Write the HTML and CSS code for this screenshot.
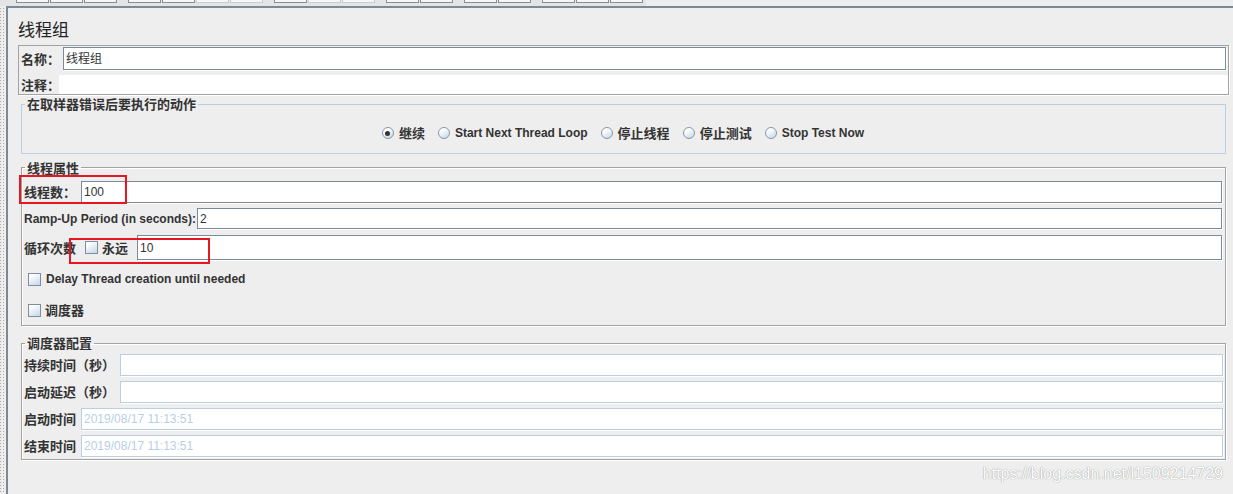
FILE: index.html
```html
<!DOCTYPE html>
<html>
<head>
<meta charset="utf-8">
<title>线程组</title>
<link rel="stylesheet" href="styles.css">
</head>
<body>
<div class="toolbar">
  <div class="tbar">
    <div class="tgroup"><span class="tb"></span><span class="tb"></span><span class="tb"></span></div>
    <div class="tgroup"><span class="tb"></span><span class="tb"></span><span class="tb dis"></span><span class="tb dis"></span></div>
    <div class="tgroup"><span class="tb"></span><span class="tb dis"></span><span class="tb dis"></span></div>
    <div class="tgroup"><span class="tb"></span><span class="tb"></span></div>
    <div class="tgroup"><span class="tb"></span><span class="tb"></span></div>
    <div class="tgroup"><span class="tb"></span><span class="tb"></span><span class="tb"></span></div>
  </div>
</div>
<div class="main">
  <div class="splitter"></div>
  <div class="panel">
    <div class="title">线程组</div>

    <div class="namebox">
      <div class="nrow">
        <span class="lbl zh w-name">名称：</span>
        <div class="field"><span class="val">线程组</span></div>
      </div>
      <div class="nrow crow">
        <span class="lbl zh w-comment">注释：</span>
        <div class="area"></div>
      </div>
    </div>

    <fieldset class="group blue err">
      <legend class="zh">在取样器错误后要执行的动作</legend>
      <div class="radios">
        <span class="ropt"><span class="rb on"></span><span class="zh">继续</span></span>
        <span class="ropt"><span class="rb"></span><span>Start Next Thread Loop</span></span>
        <span class="ropt"><span class="rb"></span><span class="zh">停止线程</span></span>
        <span class="ropt"><span class="rb"></span><span class="zh">停止测试</span></span>
        <span class="ropt"><span class="rb"></span><span>Stop Test Now</span></span>
      </div>
    </fieldset>

    <fieldset class="group etched props">
      <legend class="zh">线程属性</legend>
      <div class="frow r1">
        <span class="lbl zh w-threads">线程数：</span>
        <div class="field"><span class="val">100</span></div>
        <span class="mark mark1"></span>
      </div>
      <div class="frow r2">
        <span class="lbl w-ramp">Ramp-Up Period (in seconds):</span>
        <div class="field"><span class="val">2</span></div>
      </div>
      <div class="frow r3">
        <span class="lbl zh w-loop">循环次数</span>
        <span class="cb"></span>
        <span class="lbl zh w-forever">永远</span>
        <div class="field"><span class="val">10</span></div>
        <span class="mark mark2"></span>
      </div>
      <div class="crow2 delay">
        <span class="cb"></span>
        <span>Delay Thread creation until needed</span>
      </div>
      <div class="crow2 sched">
        <span class="cb"></span>
        <span class="zh">调度器</span>
      </div>
    </fieldset>

    <fieldset class="group etched schedcfg">
      <legend class="zh">调度器配置</legend>
      <div class="frow s">
        <span class="lbl zh w-dur">持续时间（秒）</span>
        <div class="field off"></div>
      </div>
      <div class="frow s">
        <span class="lbl zh w-dur">启动延迟（秒）</span>
        <div class="field off"></div>
      </div>
      <div class="frow s">
        <span class="lbl zh w-time">启动时间</span>
        <div class="field off"><span class="val dim">2019/08/17 11:13:51</span></div>
      </div>
      <div class="frow s">
        <span class="lbl zh w-time">结束时间</span>
        <div class="field off"><span class="val dim">2019/08/17 11:13:51</span></div>
      </div>
    </fieldset>

    <div class="wm">https://blog.csdn.net/l1509214729</div>
  </div>
</div>
</body>
</html>
```

FILE: styles.css
```css
* { box-sizing: border-box; }
html, body { margin: 0; padding: 0; }
body {
  width: 1233px;
  height: 494px;
  overflow: hidden;
  background: #eeeeee;
  font-family: "Liberation Sans", "Noto Sans CJK SC", sans-serif;
  font-size: 12px;
  font-weight: bold;
  color: #333333;
}
.zh { font-family: "Noto Sans CJK SC", sans-serif; font-size: 13px; }

/* toolbar remnants */
.toolbar { height: 6px; display: flex; }
.tbar {
  display: flex;
  gap: 11px;
  padding: 0 3px 0 16px;
  height: 6px;
  background: #e4e4e4;
}
.tgroup { display: flex; gap: 1px; }
.tb {
  width: 33px;
  height: 3px;
  border: 1px solid #8e8e8e;
  border-top: 0;
  background: #f6f6f6;
}
.tb.dis { border-color: #cdcdcd; }

.main { display: flex; height: 488px; }
.splitter {
  width: 6px;
  background-color: #eeeeee;
  background-image:
    linear-gradient(transparent 1px, #eeeeee 1px),
    linear-gradient(90deg, #a8a8a8 1px, #eeeeee 1px);
  background-size: 3px 3px;
  background-position: 0 2px;
}
.panel {
  flex: 1;
  border-top: 2px solid #7a8a99;
  border-left: 2px solid #7a8a99;
  padding: 0 4px 0 10px;
}
.title {
  font-family: "Noto Sans CJK SC", sans-serif;
  font-weight: normal;
  font-size: 17px;
  line-height: 22px;
  padding-top: 10px;
  margin-bottom: 5px;
  color: #222;
}

/* name / comment box */
.namebox {
  border: 1px solid #a3a3a3;
  box-shadow: 1px 1px 0 #ffffff;
  padding: 1px 2px 0 0;
}
.nrow { display: flex; align-items: center; height: 23px; }
.nrow.crow { height: 19px; margin-top: 5px; margin-right: -2px; }
.lbl { white-space: nowrap; flex: none; line-height: 16px; }
.w-name { width: 44px; padding-left: 2px; }
.w-comment { width: 40px; padding-left: 2px; }
.area { flex: 1; align-self: stretch; background: #ffffff; }

.field {
  flex: 1;
  align-self: stretch;
  background: #ffffff;
  border: 1px solid #7a8a99;
  box-shadow: 1px 1px 0 #ffffff;
  display: flex;
  align-items: center;
  padding-left: 2px;
  min-width: 0;
}
.field.off { border-color: #b8cfe5; }
.val { font-weight: normal; font-size: 12px; line-height: 14px; color: #333; }
.val.dim { color: #b8cfe5; }

/* fieldsets */
.group {
  margin: 0 3px;
  min-width: 0;
  border: 1px solid #a3a3a3;
  box-shadow: inset 1px 1px 0 #ffffff, 1px 1px 0 #ffffff;
  padding: 0 3px 0 2px;
}
.group.blue { border-color: #b8cfe5; box-shadow: none; }
.group legend {
  line-height: 14px;
  padding: 0 2px;
  margin-left: 1px;
}
.err { margin-top: 2px; padding-top: 14px; padding-bottom: 12px; }
.radios {
  display: flex;
  justify-content: center;
  align-items: center;
  gap: 13px;
  height: 16px;
}
.ropt { display: flex; align-items: center; gap: 5px; white-space: nowrap; line-height: 16px; }
.rb {
  width: 12px;
  height: 12px;
  border-radius: 50%;
  border: 1px solid #8796a6;
  background: linear-gradient(150deg, #ffffff 25%, #c2d5e8 100%);
  position: relative;
  flex: none;
}
.rb.on::after {
  content: "";
  position: absolute;
  left: 2.5px; top: 2.5px;
  width: 5px; height: 5px;
  border-radius: 50%;
  background: #333333;
}
.cb {
  width: 13px;
  height: 13px;
  flex: none;
  border: 1px solid #7f8e9d;
  background: linear-gradient(150deg, #ffffff 15%, #c6d7e8 100%);
}

.props { margin-top: 6px; padding-top: 6px; padding-bottom: 5px; }
.props legend { line-height: 15px; }

.frow { display: flex; align-items: center; position: relative; }
.r1 { height: 22px; }
.r2 { height: 21px; margin-top: 5px; }
.r3 { height: 25px; margin-top: 6px; }
.w-threads { width: 57px; }
.w-ramp { width: 173px; }
.w-loop { width: 61px; }
.r3 .cb { margin-right: 4px; }
.w-forever { width: 35px; }

.crow2 { display: flex; align-items: center; gap: 5px; height: 20px; padding-left: 4px; line-height: 16px; }
.delay { margin-top: 9px; }
.sched { margin-top: 11px; gap: 4px; }

.mark {
  position: absolute;
  border: 2px solid #e8161e;
  pointer-events: none;
}
.mark1 { left: -5px; top: -6px; width: 108px; height: 29px; }
.mark2 { left: 45px; top: 3px; width: 141px; height: 26px; }

.schedcfg { margin-top: 10px; padding-top: 4px; padding-bottom: 2px; padding-right: 2px; }
.frow.s { height: 22px; margin-bottom: 5px; }
.frow.s:last-child { margin-bottom: 0; }
.w-dur { width: 96px; }
.w-time { width: 57px; }

.wm {
  text-align: right;
  font-family: "Liberation Sans", sans-serif;
  font-weight: normal;
  font-size: 16px;
  line-height: 18px;
  margin: 5px 6px 0 0;
  color: #ffffff;
  text-shadow: 0 0 1px #9a9a9a, 0 0 1px #b0b0b0;
}
```
